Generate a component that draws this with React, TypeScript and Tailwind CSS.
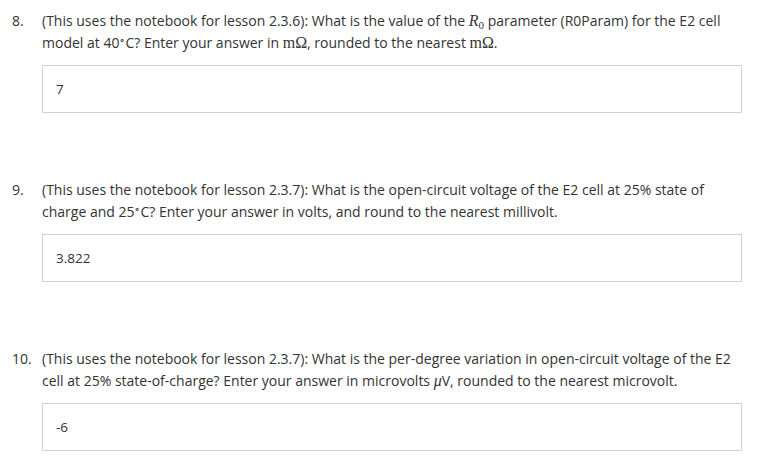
import React from 'react';

const Math = ({ children }: { children: React.ReactNode }) => (
  <span className="font-['Liberation_Serif',serif] text-[16px] leading-none">{children}</span>
);

const Deg = () => <sup className="text-[10px] leading-none">∘</sup>;

const questions: { n: string; text: React.ReactNode; answer: string }[] = [
  {
    n: '8.',
    text: (
      <>
        (This uses the notebook for lesson 2.3.6): What is the value of the{' '}
        <Math>
          <i>R</i>
          <sub className="text-[11px] not-italic leading-none">0</sub>
        </Math>{' '}
        parameter (R0Param) for the E2 cell model at 40<Deg />C? Enter your answer in{' '}
        <Math>mΩ</Math>, rounded to the nearest <Math>mΩ</Math>.
      </>
    ),
    answer: '7',
  },
  {
    n: '9.',
    text: (
      <>
        (This uses the notebook for lesson 2.3.7): What is the open-circuit voltage of the E2 cell at 25% state of
        charge and 25<Deg />C? Enter your answer in volts, and round to the nearest millivolt.
      </>
    ),
    answer: '3.822',
  },
  {
    n: '10.',
    text: (
      <>
        (This uses the notebook for lesson 2.3.7): What is the per-degree variation in open-circuit voltage of the E2
        cell at 25% state-of-charge? Enter your answer in microvolts{' '}
        <Math>
          <i>μ</i>
        </Math>
        V, rounded to the nearest microvolt.
      </>
    ),
    answer: '-6',
  },
];

export default function App() {
  return (
    <div className="min-h-screen bg-white pl-[12px] pr-[19px] pt-[10px] font-['Open_Sans',sans-serif] text-[14px] text-[#333]">
      <div className="flex flex-col gap-[66px]">
        {questions.map((q) => (
          <div key={q.n} className="flex">
            <div className="w-[30px] shrink-0 leading-[22px]">{q.n}</div>
            <div className="flex-1">
              <p className="h-[44px] leading-[22px]">{q.text}</p>
              <div className="mt-[11px] flex h-[48px] items-center border border-[#cfd1d8] px-[13px] text-[13.5px] text-[#333]">
                {q.answer}
              </div>
            </div>
          </div>
        ))}
      </div>
    </div>
  );
}
